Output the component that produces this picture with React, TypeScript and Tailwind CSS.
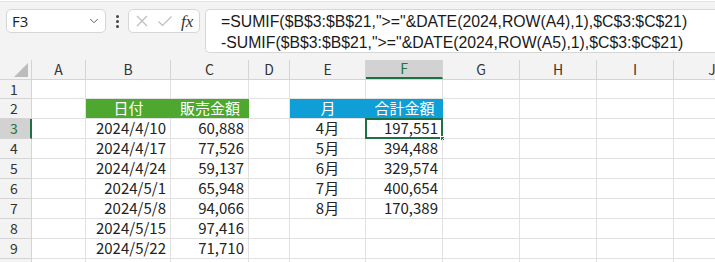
import { ChevronDown } from 'lucide-react'

const cols = [
  { key: 'A', w: 54 },
  { key: 'B', w: 85 },
  { key: 'C', w: 78 },
  { key: 'D', w: 41 },
  { key: 'E', w: 76 },
  { key: 'F', w: 77 },
  { key: 'G', w: 77 },
  { key: 'H', w: 77 },
  { key: 'I', w: 77 },
  { key: 'J', w: 77 },
]

type Cell = { text: string; align?: 'left' | 'right' | 'center'; fill?: 'green' | 'blue'; selected?: boolean }

const sales: [string, string][] = [
  ['2024/4/10', '60,888'],
  ['2024/4/17', '77,526'],
  ['2024/4/24', '59,137'],
  ['2024/5/1', '65,948'],
  ['2024/5/8', '94,066'],
  ['2024/5/15', '97,416'],
  ['2024/5/22', '71,710'],
]

const totals: [string, string][] = [
  ['4月', '197,551'],
  ['5月', '394,488'],
  ['6月', '329,574'],
  ['7月', '400,654'],
  ['8月', '170,389'],
]

function rowCells(r: number): Record<string, Cell> {
  const out: Record<string, Cell> = {}
  if (r === 2) {
    out.B = { text: '日付', align: 'center', fill: 'green' }
    out.C = { text: '販売金額', align: 'center', fill: 'green' }
    out.E = { text: '月', align: 'center', fill: 'blue' }
    out.F = { text: '合計金額', align: 'center', fill: 'blue' }
  }
  const s = sales[r - 3]
  if (s) {
    out.B = { text: s[0], align: 'right' }
    out.C = { text: s[1], align: 'right' }
  }
  const t = totals[r - 3]
  if (t) {
    out.E = { text: t[0], align: 'center' }
    out.F = { text: t[1], align: 'right', selected: r === 3 }
  }
  return out
}

function Toolbar() {
  return (
    <div className="h-[60px] bg-[#f3f3f3] flex flex-col">
      <div className="h-px bg-white" />
      <div className="h-px bg-[#e3e3e3]" />
      <div className="flex items-start pt-[7px] pl-[6px]">
        <div className="w-[100px] h-[24px] bg-white border border-[#d6d6d6] rounded-[5px] flex items-center justify-between pl-[5px] pr-[4px]">
          <span className="text-[15px] text-[#222] font-['Open_Sans',sans-serif]">F3</span>
          <ChevronDown size={14} strokeWidth={1.6} className="text-[#555]" />
        </div>
        <div className="w-[22px] h-[24px] flex flex-col items-center justify-center gap-[2px]">
          <span className="w-[3px] h-[3px] bg-[#444] rounded-full" />
          <span className="w-[3px] h-[3px] bg-[#444] rounded-full" />
          <span className="w-[3px] h-[3px] bg-[#444] rounded-full" />
        </div>
        <div className="w-[72px] h-[24px] bg-white border border-[#d6d6d6] rounded-[5px] flex items-center pl-[5px]">
          <svg width="14" height="14" viewBox="0 0 14 14" className="ml-[1px]">
            <path d="M2 2 L12 12 M12 2 L2 12" stroke="#bdbdbd" strokeWidth="1.2" fill="none" />
          </svg>
          <svg width="16" height="14" viewBox="0 0 16 14" className="ml-[8px]">
            <path d="M1.5 7.5 L5.5 11.5 L14.5 2.5" stroke="#bdbdbd" strokeWidth="1.2" fill="none" />
          </svg>
          <span className="ml-[8px] text-[17px] italic leading-none text-[#333] font-['Liberation_Serif',serif]">fx</span>
        </div>
        <div className="ml-[5px] flex-1 h-[44px] bg-white border border-r-0 border-[#d6d6d6] rounded-l-[5px] pl-[15px] pt-[1px] text-[15.8px] leading-[21px] text-[#1a1a1a] font-['Liberation_Sans',sans-serif] whitespace-nowrap">
          <div>=SUMIF($B$3:$B$21,"&gt;="&amp;DATE(2024,ROW(A4),1),$C$3:$C$21)</div>
          <div>-SUMIF($B$3:$B$21,"&gt;="&amp;DATE(2024,ROW(A5),1),$C$3:$C$21)</div>
        </div>
      </div>
    </div>
  )
}

function HeaderRow() {
  return (
    <div className="flex h-[20px] bg-[#f3f3f3] border-b border-[#d4d4d4]">
      <div className="w-[32px] shrink-0 border-r border-[#d4d4d4] relative">
        <svg width="14" height="14" viewBox="0 0 14 14" className="absolute right-[3px] bottom-[2px]">
          <path d="M14 0 L14 14 L0 14 Z" fill="#bcbcbc" />
        </svg>
      </div>
      {cols.map(c => (
        <div
          key={c.key}
          style={{ width: c.w }}
          className={`shrink-0 flex items-center justify-center text-[14px] border-r border-[#d4d4d4] ${
            c.key === 'F' ? 'bg-[#d2d2d2] text-[#1e7145] border-b-2 border-b-[#1e7145]' : 'text-[#333]'
          }`}
        >
          {c.key}
        </div>
      ))}
    </div>
  )
}

function DataRow({ r }: { r: number }) {
  const cells = rowCells(r)
  const h = r === 1 ? 'h-[19px]' : 'h-[20px]'
  return (
    <div className={`flex ${h}`}>
      <div
        className={`w-[32px] shrink-0 flex items-center pl-[10px] text-[14px] border-b border-[#d4d4d4] ${
          r === 3 ? 'bg-[#d2d2d2] text-[#1e7145] border-r-2 border-r-[#1e7145]' : 'bg-[#f3f3f3] text-[#333] border-r border-r-[#d4d4d4]'
        }`}
      >
        {r < 10 ? r : null}
      </div>
      {cols.map(c => {
        const cell = cells[c.key]
        const fill = cell?.fill === 'green' ? 'bg-[#4ea72e] text-white' : cell?.fill === 'blue' ? 'bg-[#0f9ed5] text-white' : 'text-[#222]'
        const align = cell?.align === 'right' ? 'justify-end pr-[4px]' : cell?.align === 'center' ? 'justify-center' : 'justify-start pl-[3px]'
        const grid = cell?.fill ? 'border-b border-[#e1e1e1]' : 'border-b border-r border-[#e1e1e1]'
        return (
          <div key={c.key} style={{ width: c.w }} className={`shrink-0 relative flex items-center ${align} ${fill} ${grid}`}>
            {cell?.text}
            {cell?.selected && (
              <>
                <div className="absolute left-[-1px] top-[-1px] right-[-1px] bottom-[-1px] border-2 border-[#1e7145]" />
                <div className="absolute right-[-3px] bottom-[-3px] w-[5px] h-[5px] bg-[#1e7145] border border-white" />
              </>
            )}
          </div>
        )
      })}
    </div>
  )
}

export default function App() {
  return (
    <div className="w-[715px] h-[262px] overflow-hidden bg-white font-['Noto_Sans_CJK_JP',sans-serif] text-[15px]">
      <Toolbar />
      <HeaderRow />
      {[1, 2, 3, 4, 5, 6, 7, 8, 9, 10].map(r => (
        <DataRow key={r} r={r} />
      ))}
    </div>
  )
}
